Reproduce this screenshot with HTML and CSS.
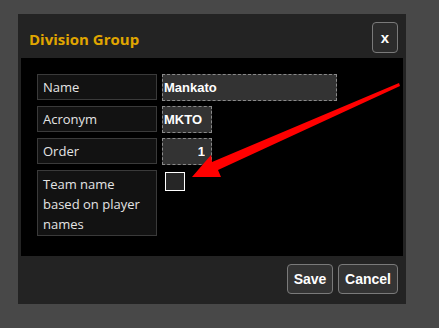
FILE: index.html
```html
<!DOCTYPE html>
<html>
<head>
    <meta charset="utf-8">
    <title>Division Group</title>
    <link rel="stylesheet" href="styles.css">
</head>
<body>
    <div class="dialog">
        <div class="dialog-head">
            <h2 class="dialog-title">Division Group</h2>
            <button class="close-btn">x</button>
        </div>
        <div class="dialog-body">
            <div class="form-grid">
                <div class="field-label">Name</div>
                <div class="field"><input class="txt txt-name" type="text" value="Mankato"></div>
                <div class="field-label">Acronym</div>
                <div class="field"><input class="txt txt-short" type="text" value="MKTO"></div>
                <div class="field-label">Order</div>
                <div class="field"><input class="txt txt-short txt-num" type="text" value="1"></div>
                <div class="field-label multi">Team name based on player names</div>
                <div class="field"><span class="check"></span></div>
            </div>
        </div>
        <div class="dialog-foot">
            <button class="btn btn-save">Save</button>
            <button class="btn btn-cancel">Cancel</button>
        </div>
    </div>

    <!-- annotation arrow drawn over the screenshot -->
    <svg class="arrow" width="439" height="328" viewBox="0 0 439 328">
        <polygon points="192,177 211,155 212,162 399,83 400,86 218,170 221,177" fill="#ff0000"/>
    </svg>
</body>
</html>
```

FILE: styles.css
```css
body {
    margin: 0;
    background-color: #484848;
    font-family: "Open Sans", "Noto Sans", sans-serif;
    position: relative;
    width: 439px;
    height: 328px;
    overflow: hidden;
}
.dialog {
    position: relative;
    top: 14px;
    margin-left: 18px;
    width: 388px;
    height: 290px;
    background-color: #232323;
    display: flex;
    flex-direction: column;
}
.dialog-head {
    height: 44px;
    display: flex;
    align-items: flex-start;
    justify-content: space-between;
    padding: 0 8px 0 11px;
}
.dialog-title {
    margin: 15px 0 0 0;
    font-size: 15px;
    font-weight: bold;
    color: #e0a600;
    line-height: 20px;
}
.close-btn {
    margin-top: 8px;
    width: 26px;
    height: 31px;
    padding: 0;
    background-color: #2c2c2c;
    border: 1px solid #7a7a7a;
    border-radius: 4px;
    color: #fff;
    font: bold 15px "Liberation Sans", sans-serif;
}
.dialog-body {
    margin: 0 3px;
    height: 198px;
    background-color: #000;
    padding: 16px;
    box-sizing: border-box;
}
.form-grid {
    display: grid;
    grid-template-columns: 120px auto;
    column-gap: 5px;
    row-gap: 6px;
}
.field {
    height: 26px;
}
.field-label {
    height: 26px;
    box-sizing: border-box;
    border: 1px solid #3a3a3a;
    background-color: #121212;
    color: #e4e4e4;
    font-size: 13px;
    line-height: 24px;
    padding: 0 5px;
}
.field-label.multi {
    height: 66px;
    line-height: 20px;
    padding-top: 3px;
}
.txt {
    display: block;
    height: 27px;
    box-sizing: border-box;
    border: 1px dashed #8a8a8a;
    background-color: #333;
    color: #fff;
    font: bold 13px "Liberation Sans", sans-serif;
    padding: 0 1px;
    margin: 0;
    outline: none;
}
.txt-name {
    width: 175px;
}
.txt-short {
    width: 50px;
}
.txt-num {
    text-align: right;
    padding-right: 6px;
}
.check {
    display: block;
    margin: 2px 0 0 3px;
    width: 20px;
    height: 19px;
    box-sizing: border-box;
    border: 1px solid #fff;
    background-color: #262626;
}
.dialog-foot {
    flex: 1;
    display: flex;
    justify-content: flex-end;
    align-items: flex-start;
    gap: 5px;
    padding: 8px 8px 0 0;
}
.btn {
    height: 30px;
    padding: 0;
    background-color: #343434;
    border: 1px solid #7a7a7a;
    border-radius: 4px;
    color: #fff;
    font: bold 14px "Liberation Sans", sans-serif;
}
.btn-save {
    width: 46px;
}
.btn-cancel {
    width: 60px;
}
.arrow {
    position: absolute;
    top: 0;
    left: 0;
}
```
